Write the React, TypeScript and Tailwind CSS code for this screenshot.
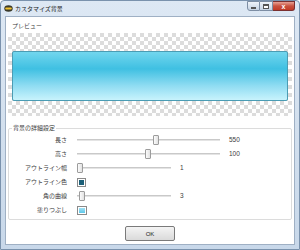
import React from 'react'

const jp = { fontFamily: '"Noto Sans CJK JP", "Noto Sans", sans-serif' }

// スライダー (トラック + つまみ)
function Slider({ width, thumb }: { width: number; thumb: number }) {
    return (
        <div className="relative h-[12px]" style={{ width }}>
            <div className="absolute left-0 right-0 top-[5px] h-[2px] bg-[#e4e4e4] border-t border-[#c9c9c9]"></div>
            <div
                className="absolute top-[1px] w-[6px] h-[10px] rounded-[1px] border border-[#9c9c9c] bg-gradient-to-r from-[#fbfbfb] to-[#e2e2e2]"
                style={{ left: thumb }}
            ></div>
        </div>
    )
}

function Row({ label, children }: { label: string; children: React.ReactNode }) {
    return (
        <div className="flex items-center h-[14px]">
            <div className="w-[58px] text-right text-[6px] leading-[8px] text-[#3c3c3c]">{label}</div>
            <div className="ml-[10px] flex items-center">{children}</div>
        </div>
    )
}

function Value({ v }: { v: string }) {
    return <span className="ml-[9px] text-[6.5px] leading-[8px] text-[#3c3c3c] font-['Liberation_Sans']">{v}</span>
}

export default function App() {
    return (
        <div
            className="w-[300px] h-[250px] flex flex-col bg-gradient-to-b from-[#dde8f4] via-[#d3e0ee] to-[#c8d8ea] border border-[#7a92ad] rounded-t-[4px]"
            style={jp}
        >
            {/* タイトルバー */}
            <div className="h-[15px] flex items-center pl-[3px] relative">
                <svg width="9" height="7" viewBox="0 0 9 7">
                    <ellipse cx="4.5" cy="3.5" rx="4.2" ry="3.2" fill="#3a3a2a" />
                    <rect x="1.2" y="2.6" width="6.6" height="1.8" rx="0.9" fill="#f2c230" />
                </svg>
                <span className="ml-[2px] text-[6px] leading-[8px] text-[#1a1a1a]">カスタマイズ背景</span>

                {/* キャプションボタン */}
                <div className="ml-auto mr-[4px] self-start flex">
                    <div className="w-[13px] h-[10px] border border-[#7d8ea4] rounded-bl-[3px] bg-gradient-to-b from-[#eef3f9] to-[#c5d3e3] flex items-center justify-center">
                        <div className="w-[5px] h-[2px] bg-white border border-[#555] mt-[3px]"></div>
                    </div>
                    <div className="w-[13px] h-[10px] border-y border-r border-[#7d8ea4] bg-gradient-to-b from-[#eef3f9] to-[#c5d3e3] flex items-center justify-center">
                        <div className="w-[6px] h-[5px] border border-[#555] border-t-2 bg-white"></div>
                    </div>
                    <div className="w-[22px] h-[10px] border-y border-r border-[#7a3030] rounded-br-[3px] bg-gradient-to-b from-[#e8a195] via-[#c9513f] to-[#c23a26] flex items-center justify-center">
                        <span className="text-[7px] leading-[7px] text-white font-bold font-['Liberation_Sans']">x</span>
                    </div>
                </div>
            </div>

            {/* クライアント領域 */}
            <div className="flex-1 mx-[4px] mb-[4px] bg-white border border-[#9fb0c4] flex flex-col">
                <div className="pl-[6px] pt-[5px] text-[6px] leading-[8px] text-[#3c3c3c]">プレビュー</div>

                <div className="mx-[2px] mt-[3px] h-[83px] pt-[18px] pb-[15px] px-[4px] bg-[repeating-conic-gradient(#dcdcdc_0_25%,#ffffff_0_50%)] bg-[length:8px_8px]">
                    <div className="h-full rounded-[2px] border border-[#4a9cb4] bg-[linear-gradient(to_bottom,#72d6ee_0%,#3fc0e2_35%,#8fdcf2_70%,#c8f3fc_100%)]"></div>
                </div>

                <fieldset className="mx-[2px] mt-[8px] border border-[#dcdcdc] rounded-[2px] px-0 pb-[2px]">
                    <legend className="ml-[3px] px-[1px] text-[6px] leading-[8px] text-[#3c3c3c]">背景の詳細設定</legend>
                    <div className="pt-[1px] flex flex-col">
                        <Row label="長さ">
                            <Slider width={143} thumb={76} />
                            <Value v="550" />
                        </Row>
                        <Row label="高さ">
                            <Slider width={143} thumb={68} />
                            <Value v="100" />
                        </Row>
                        <Row label="アウトライン幅">
                            <Slider width={94} thumb={0} />
                            <Value v="1" />
                        </Row>
                        <Row label="アウトライン色">
                            <div className="w-[9px] h-[9px] border border-[#8a8a8a] p-[1px] bg-white">
                                <div className="w-full h-full bg-[#1b5f78]"></div>
                            </div>
                        </Row>
                        <Row label="角の曲線">
                            <Slider width={94} thumb={2} />
                            <Value v="3" />
                        </Row>
                        <Row label="塗りつぶし">
                            <div className="w-[10px] h-[9px] border border-[#8a8a8a] p-[1px] bg-white">
                                <div className="w-full h-full bg-gradient-to-b from-[#9fe0f4] to-[#5cc8ea]"></div>
                            </div>
                        </Row>
                    </div>
                </fieldset>

                <div className="flex justify-center mt-[6px]">
                    <button className="w-[50px] h-[15px] rounded-[2px] border border-[#7a7a7a] bg-gradient-to-b from-[#f4f4f4] to-[#dadada] text-[6px] leading-[8px] text-[#222] font-['Liberation_Sans']">
                        OK
                    </button>
                </div>
            </div>
        </div>
    )
}
